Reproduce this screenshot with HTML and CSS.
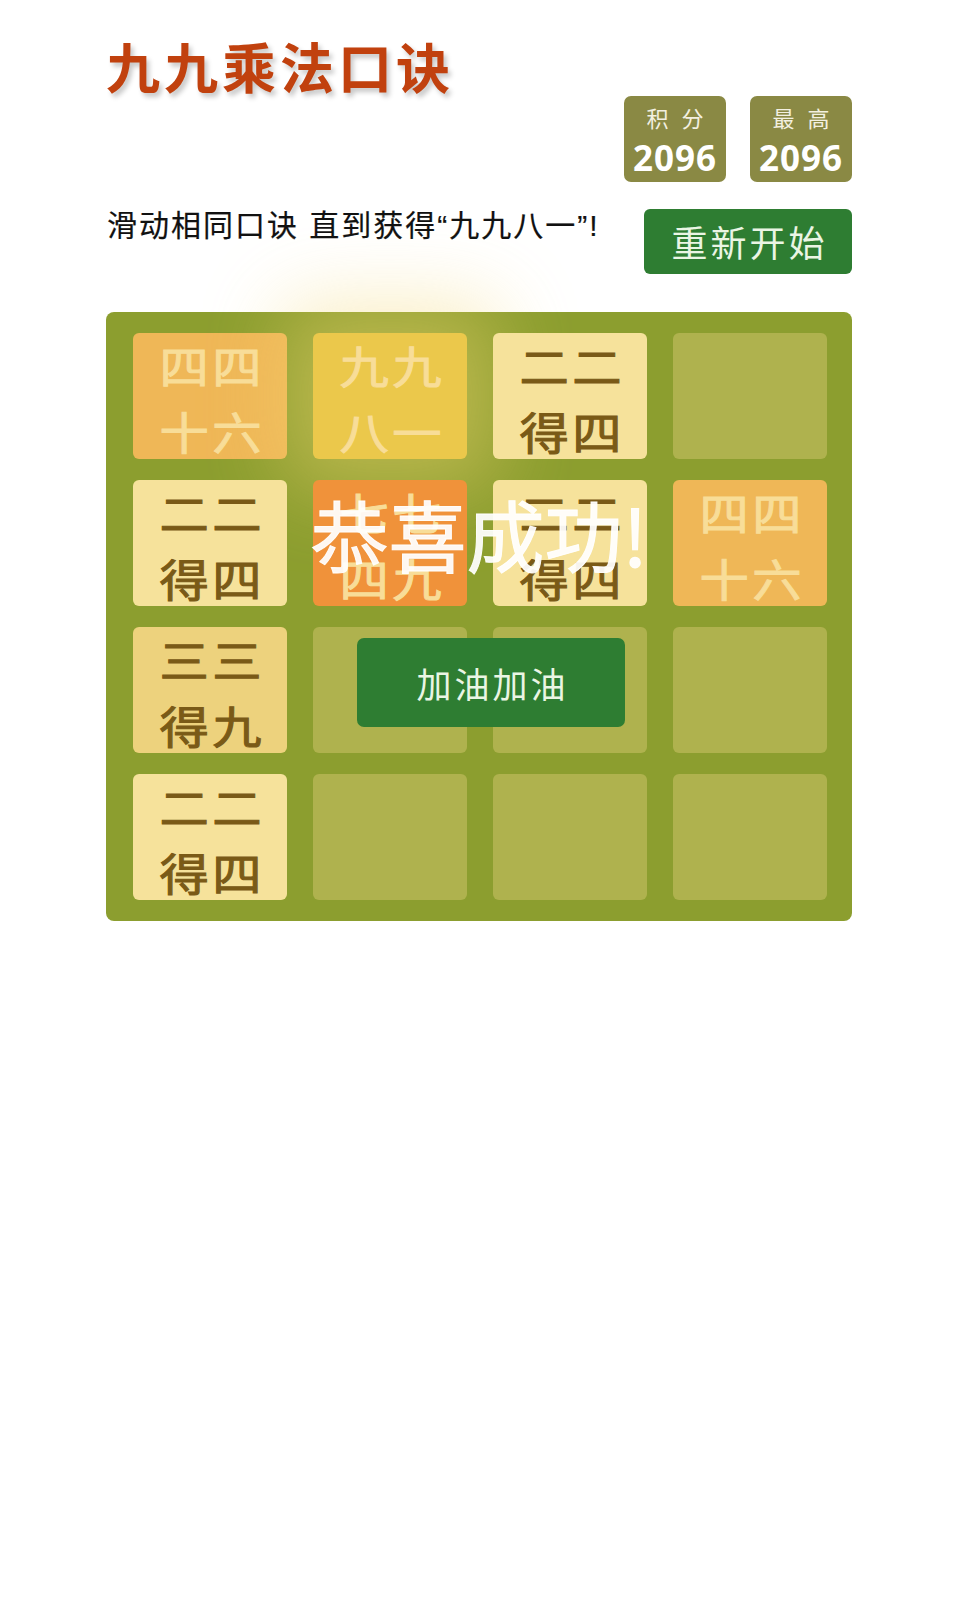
FILE: index.html
```html
<!DOCTYPE html>
<html lang="zh-CN">
<head>
    <meta charset="UTF-8">
    <title>九九乘法口诀</title>
    <meta name="viewport" content="width=device-width, initial-scale=1">
    <link rel="stylesheet" href="styles.css">
</head>
<body>
    <div class="container">
        <h1 class="title">九九乘法口诀</h1>
        <div class="scores">
            <div class="score-box">
                <div class="score-label">积 分</div>
                <div class="score-value">2096</div>
            </div>
            <div class="score-box">
                <div class="score-label">最 高</div>
                <div class="score-value">2096</div>
            </div>
        </div>
        <div class="intro">
            <p class="intro-text">滑动相同口诀 直到获得“九九八一”!</p>
            <button class="restart">重新开始</button>
        </div>

        <div class="board">
            <div class="grid">
                <!-- row 1 -->
                <div class="tile t16 light"><span>四四</span><span>十六</span></div>
                <div class="tile t81 light glow"><span>九九</span><span>八一</span></div>
                <div class="tile t4"><span>二二</span><span>得四</span></div>
                <div class="tile"></div>
                <!-- row 2 -->
                <div class="tile t4"><span>二二</span><span>得四</span></div>
                <div class="tile t49 light"><span>七七</span><span>四九</span></div>
                <div class="tile t4"><span>二二</span><span>得四</span></div>
                <div class="tile t16 light"><span>四四</span><span>十六</span></div>
                <!-- row 3 -->
                <div class="tile t9"><span>三三</span><span>得九</span></div>
                <div class="tile"></div>
                <div class="tile"></div>
                <div class="tile"></div>
                <!-- row 4 -->
                <div class="tile t4"><span>二二</span><span>得四</span></div>
                <div class="tile"></div>
                <div class="tile"></div>
                <div class="tile"></div>
            </div>
            <div class="win-message">
                <p class="win-text">恭喜成功!</p>
                <button class="keep-going">加油加油</button>
            </div>
        </div>
    </div>
</body>
</html>
```

FILE: styles.css
```css
body {
    margin: 0;
    padding: 0;
    background-color: #ffffff;
    font-family: "Noto Sans CJK SC", "Noto Sans", sans-serif;
}
.container {
    width: 746px;
    margin-left: 106px;
}
.title {
    margin: 0;
    padding-top: 35px;
    font-size: 54px;
    line-height: 62px;
    letter-spacing: 4px;
    font-weight: bold;
    color: #c1410e;
    text-shadow: 3px 4px 5px rgba(0, 0, 0, 0.22);
}
.scores {
    display: flex;
    justify-content: flex-end;
    gap: 24px;
    margin-top: -1px;
}
.score-box {
    width: 102px;
    height: 86px;
    background-color: #8a8944;
    border-radius: 7px;
    color: #ffffff;
    text-align: center;
}
.score-label {
    padding-top: 6px;
    font-size: 22px;
    line-height: 30px;
    letter-spacing: 4px;
    text-indent: 4px;
    color: #f3f0e0;
}
.score-value {
    margin-top: 4px;
    font-family: "Noto Sans", sans-serif;
    font-size: 35px;
    font-weight: bold;
    line-height: 44px;
    letter-spacing: 1px;
}
.intro {
    display: flex;
    justify-content: space-between;
    align-items: flex-start;
    margin-top: 27px;
}
.intro-text {
    margin: -3px 0 0 1px;
    font-family: "Liberation Sans", "Noto Sans CJK SC", sans-serif;
    font-size: 30px;
    line-height: 40px;
    letter-spacing: 2px;
    color: #111111;
    -webkit-text-stroke: 0.2px #111111;
}
.restart {
    width: 208px;
    height: 65px;
    border: none;
    border-radius: 6px;
    background-color: #2e7d32;
    color: #eaf5e4;
    font-family: "Noto Sans CJK SC", sans-serif;
    font-size: 36px;
    letter-spacing: 3px;
    text-indent: 3px;
    line-height: 65px;
    padding: 0;
    cursor: pointer;
}
.board {
    position: relative;
    margin-top: 38px;
    padding: 21px 25px 21px 27px;
    background-color: #8c9e2f;
    border-radius: 8px;
}
.grid {
    display: grid;
    grid-template-columns: repeat(4, 1fr);
    grid-auto-rows: 126px;
    column-gap: 26px;
    row-gap: 21px;
}
.tile {
    display: flex;
    flex-direction: column;
    align-items: center;
    justify-content: center;
    padding-top: 4px;
    background-color: #afb24e;
    border-radius: 6px;
    font-size: 44px;
    line-height: 66px;
    color: #7a5a17;
    -webkit-text-stroke: 1px #7a5a17;
    letter-spacing: 3px;
    text-indent: 3px;
}
.tile span {
    transform: scaleX(1.12);
}
.tile.light {
    color: #f8dd98;
    -webkit-text-stroke: 1px #f8dd98;
}
.t4 {
    background-color: #f6e29b;
}
.t9 {
    background-color: #edd27d;
}
.t16 {
    background-color: #efb757;
}
.t49 {
    background-color: #f0923a;
}
.t81 {
    background-color: #ebc84b;
}
.glow {
    box-shadow: 0 0 80px 30px rgba(243, 215, 116, 0.45);
}
.win-message {
    position: absolute;
    left: 0;
    top: 0;
    right: 0;
    bottom: 0;
    display: flex;
    flex-direction: column;
    align-items: center;
}
.win-text {
    margin: 176px 0 0 0;
    font-family: "Noto Sans CJK SC", sans-serif;
    font-size: 78px;
    line-height: 90px;
    color: rgba(255, 255, 255, 0.93);
    -webkit-text-stroke: 1px rgba(255, 255, 255, 0.93);
}
.keep-going {
    margin-top: 60px;
    margin-left: 24px;
    width: 268px;
    height: 89px;
    border: none;
    border-radius: 7px;
    background-color: #2e7d32;
    color: #eaf5e4;
    font-family: "Noto Sans CJK SC", sans-serif;
    font-size: 35px;
    letter-spacing: 3px;
    text-indent: 3px;
    padding: 0;
    cursor: pointer;
}
```
